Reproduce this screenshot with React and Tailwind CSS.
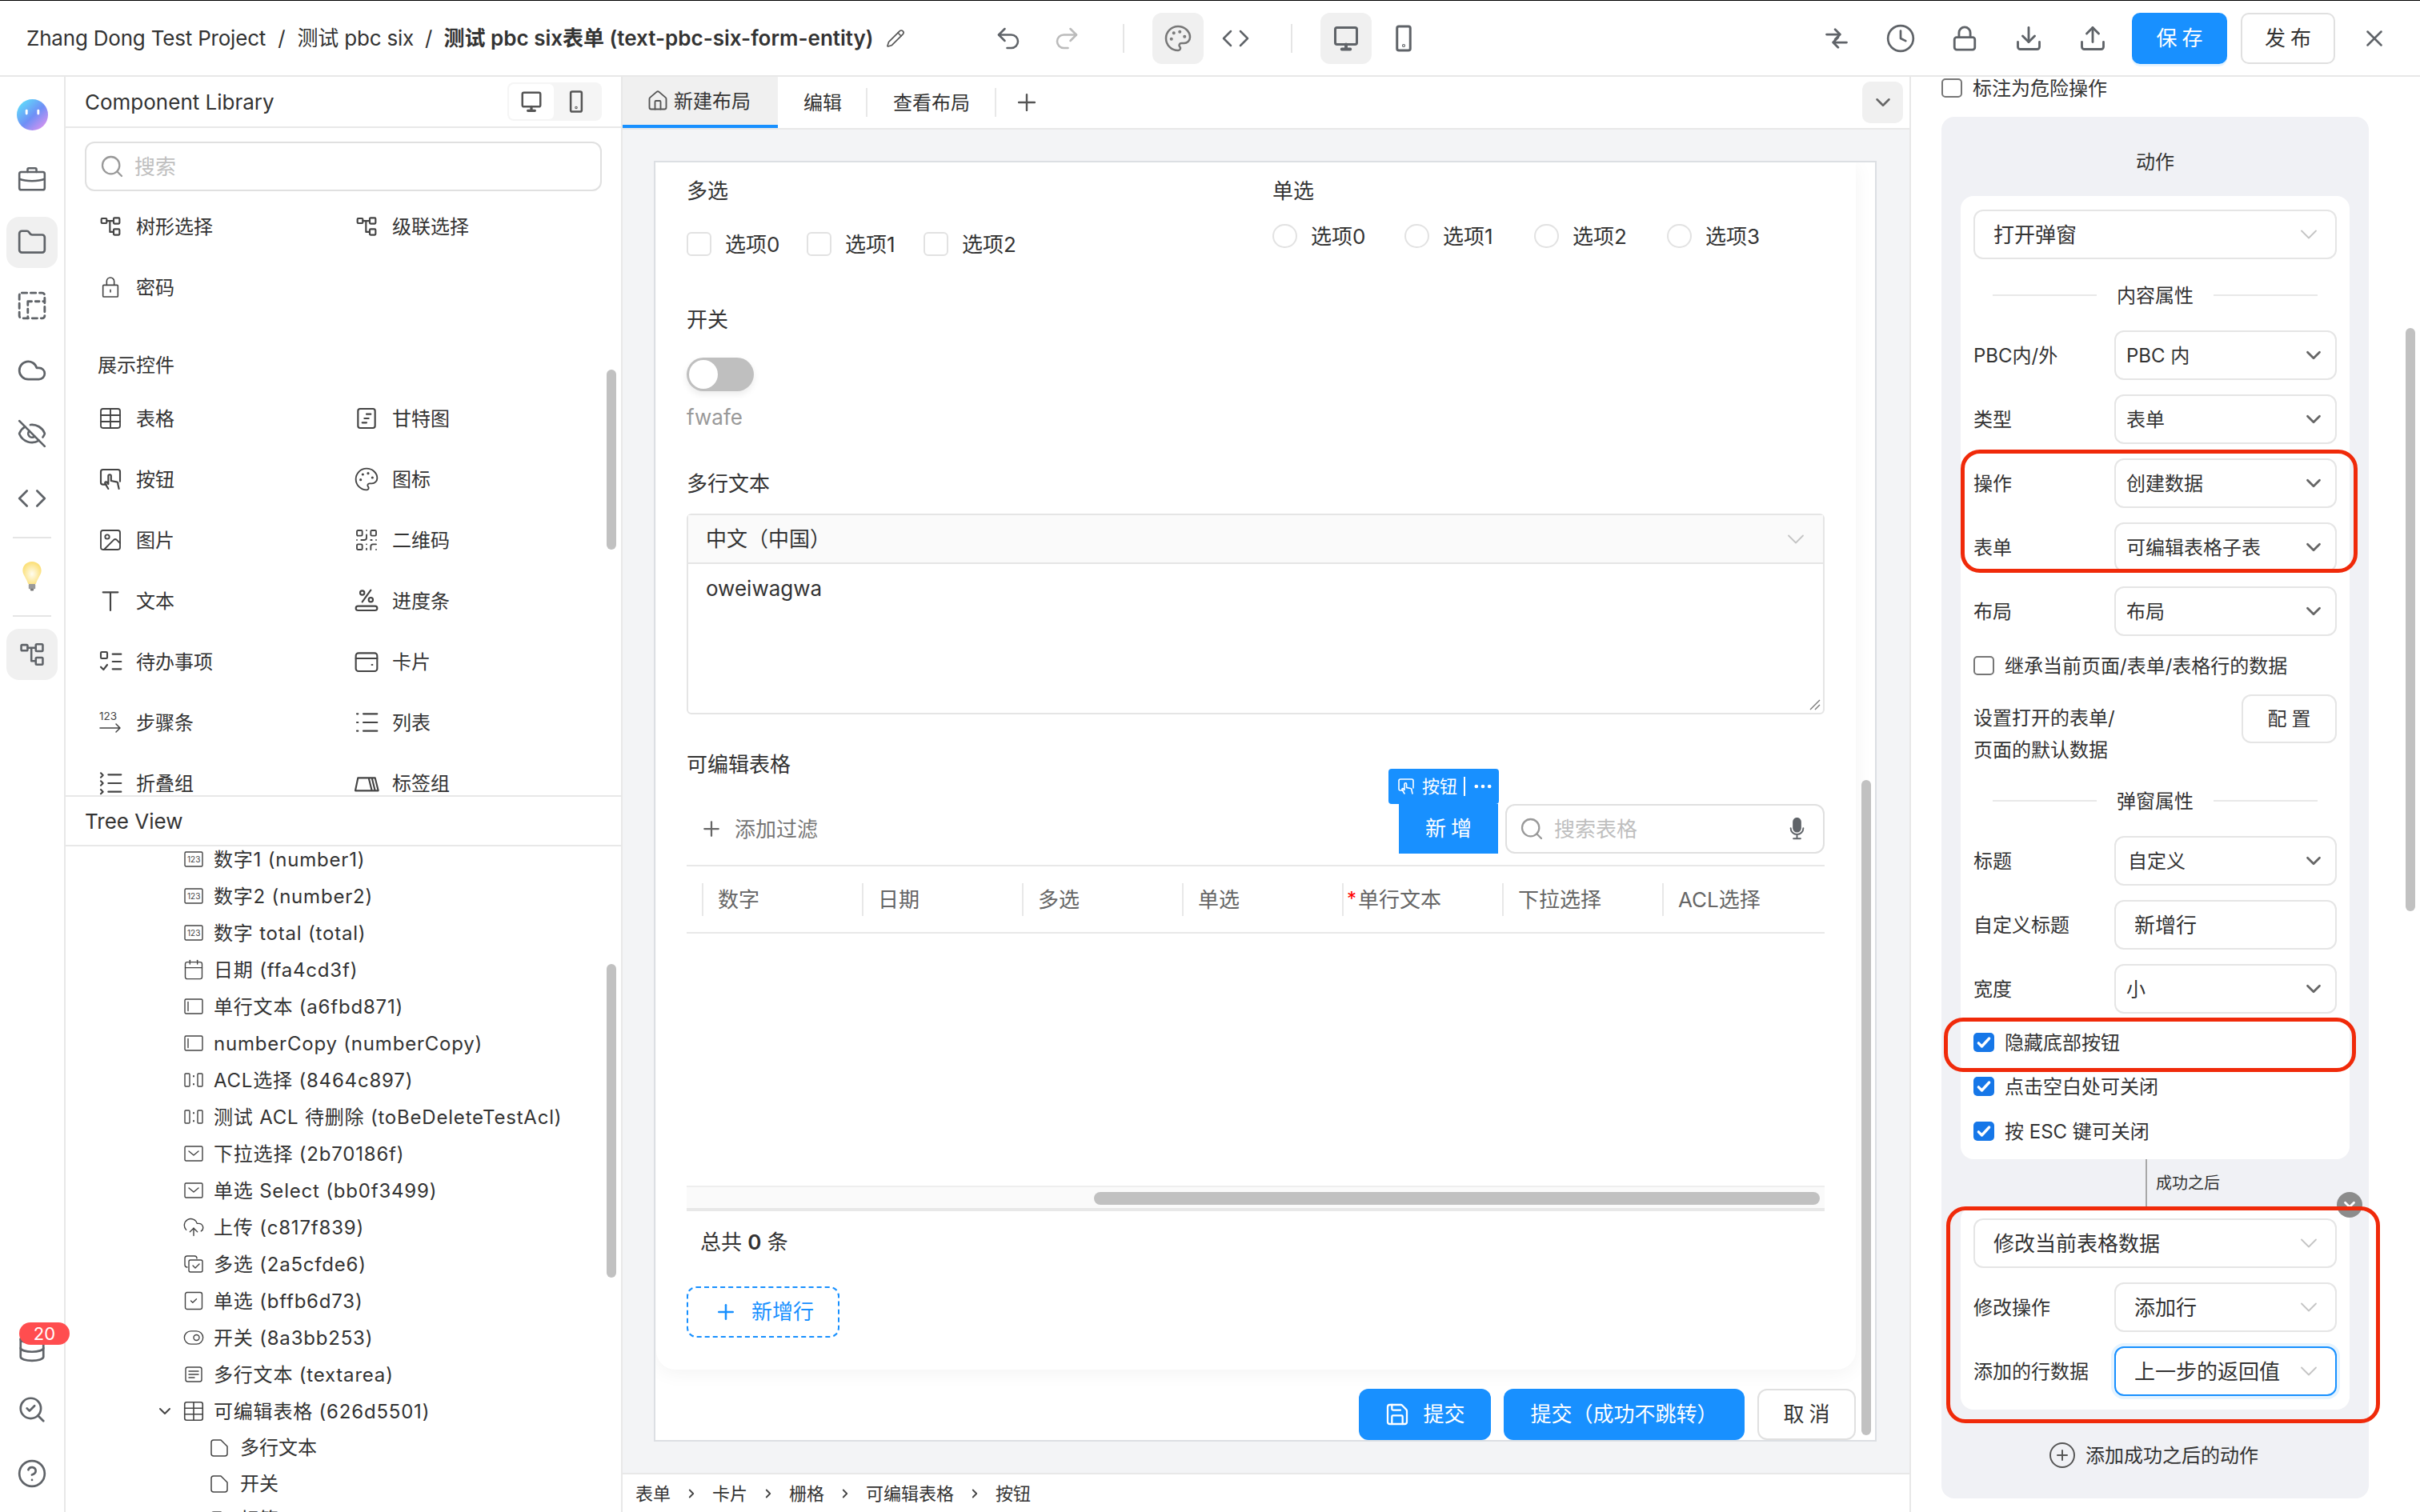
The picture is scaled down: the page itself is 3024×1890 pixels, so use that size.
import React from "react";
import {
  Undo2, Redo2, Palette, Code, Clock, Lock, Download, Upload, X, Pencil, Plus, Search,
  ChevronDown, ChevronRight, Home, Table, Image, QrCode, Calendar, CloudUpload,
  SquareCheck, ToggleRight, Folder, Cloud, EyeOff, Database, SearchCheck, CircleHelp,
  CirclePlus, Save, Ellipsis,
} from "lucide-react";

const Svg = ({ className = "w-[28px] h-[28px]", children, sw = 1.6 }) => (
  <svg viewBox="0 0 24 24" fill="none" stroke="currentColor" strokeWidth={sw} strokeLinecap="round" strokeLinejoin="round" className={className}>
    {children}
  </svg>
);

const TreeIcon = (p) => (
  <Svg {...p}>
    <rect x="3.500" y="4.500" width="5" height="4.500" rx="0.800" />
    <rect x="15" y="4" width="5.500" height="5.500" rx="0.800" />
    <rect x="15" y="14.500" width="5.500" height="5.500" rx="0.800" />
    <path d="M8.500 6.800H15M11.500 6.800V17.200H15" />
  </Svg>
);
const LockThin = (p) => (
  <Svg {...p} sw={1.2}>
    <rect x="5" y="10" width="14" height="11" rx="0.800" />
    <path d="M8.500 10V6.500a3.500 3.500 0 0 1 7 0V10M12 14.500v2" />
  </Svg>
);
const BriefcaseIcon = (p) => (
  <Svg {...p}>
    <rect x="2" y="7" width="20" height="14" rx="1.500" />
    <path d="M8.500 7V5a1 1 0 0 1 1-1h5a1 1 0 0 1 1 1v2M2 12.500c5 2 15 2 20 0" />
  </Svg>
);
const DesktopIcon = (p) => (
  <Svg {...p} sw={2}>
    <rect x="3" y="3" width="18" height="14" rx="1.500" />
    <path d="M12 17v3M8.500 21h7" strokeWidth="2.600" />
  </Svg>
);
const PhoneIcon = (p) => (
  <Svg {...p} sw={2}>
    <rect x="6.500" y="2" width="11" height="20" rx="1.500" />
    <circle cx="12" cy="18" r="0.400" />
  </Svg>
);
const SwapIcon = (p) => (
  <Svg {...p} sw={2.2}>
    <path d="M2 8h13M10.500 3l5 5-5 5M22 16H9M13.500 11l-5 5 5 5" />
  </Svg>
);
const DashedGrid = (p) => (
  <Svg {...p} sw={1.8}>
    <rect x="2" y="2" width="20" height="20" rx="2" strokeDasharray="4 3" />
    <path d="M8.700 8.700H22M8.700 8.700V22" strokeDasharray="3 3" />
  </Svg>
);
const Gantt = (p) => (
  <Svg {...p}>
    <rect x="4" y="3" width="16" height="18" rx="2" />
    <path d="M12 8h4M10 12h4M8 16h4" />
  </Svg>
);
const ButtonIcon = (p) => (
  <Svg {...p}>
    <path d="M8 17H5a2 2 0 0 1-2-2V5a2 2 0 0 1 2-2h14a2 2 0 0 1 2 2v9" />
    <path d="M10 21l-3-5c-.6-1.200 1-2 1.800-1l1.200 1.500V9a1.300 1.300 0 0 1 2.600 0v4.500l5 1c1.200.3 1.600 1.200 1.400 2.200L20 21" />
  </Svg>
);
const TextT = (p) => (
  <Svg {...p}>
    <path d="M5 4h14M12 4v17" />
  </Svg>
);
const Progress = (p) => (
  <Svg {...p}>
    <path d="M16 2 8 13" />
    <circle cx="8" cy="4.500" r="2" />
    <circle cx="16" cy="11" r="2" />
    <rect x="2" y="17" width="20" height="4" rx="2" />
  </Svg>
);
const Todo = (p) => (
  <Svg {...p}>
    <rect x="3" y="3" width="6" height="6" rx="1" />
    <path d="M3 17l2.500 2.500L9 15M14 5h8M14 12h8M14 19h8" />
  </Svg>
);
const CardIcon = (p) => (
  <Svg {...p}>
    <rect x="2" y="4" width="20" height="17" rx="2.500" />
    <path d="M2 9h20M17 15h.5" />
  </Svg>
);
const Steps = () => (
  <svg viewBox="0 0 28 28" fill="none" stroke="currentColor" strokeWidth="1.500" strokeLinecap="round" strokeLinejoin="round" className="w-[28px] h-[28px] shrink-0">
    <text x="0" y="11" fontSize="13.500" fill="currentColor" stroke="none" fontFamily="Inter">123</text>
    <path d="M1 21h25M21 16l5 5-5 5" />
  </svg>
);
const DotList = (p) => (
  <Svg {...p}>
    <path d="M9 4h13M9 12h13M9 20h13M3 4h1M3 12h1M3 20h1" />
  </Svg>
);
const Collapse = (p) => (
  <Svg {...p}>
    <path d="M10 4h12M10 12h12M10 20h12M3 2.500l2 2-2 2M3 10l2 2-2 2M3 18l2 2-2 2" />
  </Svg>
);
const TabsIcon = (p) => (
  <Svg {...p}>
    <path d="M1.500 19 4 7h10l3 12zM14 7h3l3 12M17 7h3l3 12M1.500 19H23" />
  </Svg>
);
const NumberBox = () => (
  <svg viewBox="0 0 24 24" fill="none" stroke="currentColor" strokeWidth="1.400" className="w-[24px] h-[24px]">
    <rect x="1" y="3" width="22" height="18" rx="1.500" />
    <text x="4" y="16" fontSize="10" fill="currentColor" stroke="none" fontFamily="Inter">123</text>
  </svg>
);
const InputBox = () => (
  <Svg className="w-[24px] h-[24px]" sw={1.4}>
    <rect x="1" y="3" width="22" height="18" rx="1.500" />
    <path d="M5 6.500v11" />
  </Svg>
);
const AclBox = () => (
  <Svg className="w-[24px] h-[24px]" sw={1.4}>
    <rect x="1" y="4" width="6" height="16" rx="1" />
    <rect x="17" y="4" width="6" height="16" rx="1" />
    <path d="M12 7v.5M12 17v.5" strokeWidth="2" />
  </Svg>
);
const SelectBox = () => (
  <Svg className="w-[24px] h-[24px]" sw={1.4}>
    <rect x="1" y="3" width="22" height="18" rx="1.500" />
    <path d="M6 9l6 5 6-5" />
  </Svg>
);
const MultiBox = () => (
  <Svg className="w-[24px] h-[24px]" sw={1.4}>
    <path d="M4 16c-2 0-3-1-3-3V5c0-2 1-3 3-3h9c2 0 3 1 3 3" />
    <rect x="6" y="7" width="17" height="15" rx="2" />
    <path d="M11 14l3 3 5-5" />
  </Svg>
);
const TextareaBox = () => (
  <Svg className="w-[24px] h-[24px]" sw={1.4}>
    <rect x="2" y="3" width="20" height="18" rx="2.500" />
    <path d="M6 8h12M6 12h12M6 16h7" />
  </Svg>
);
const FileBox = () => (
  <Svg className="w-[24px] h-[24px]" sw={1.5}>
    <path d="M14 2H5a3 3 0 0 0-3 3v14a3 3 0 0 0 3 3h14a3 3 0 0 0 3-3V10z" />
  </Svg>
);
const MicIcon = () => (
  <svg viewBox="0 0 24 32" className="w-[21px] h-[28px] ml-auto text-[#5f6368]" fill="none" stroke="currentColor" strokeWidth="2.200" strokeLinecap="round">
    <rect x="7" y="1" width="10" height="19" rx="5" fill="currentColor" />
    <path d="M3 15c0 5 4 9 9 9s9-4 9-9M12 24v6M7 30h10" />
  </svg>
);
const Avatar = () => (
  <svg viewBox="0 0 40 40" className="w-[39px] h-[39px]">
    <defs>
      <linearGradient id="av" x1="0.05" y1="0.1" x2="0.85" y2="0.95">
        <stop offset="0" stopColor="#5fe0fb" />
        <stop offset="0.55" stopColor="#6f8ff6" />
        <stop offset="1" stopColor="#d793f0" />
      </linearGradient>
    </defs>
    <circle cx="20" cy="20" r="20" fill="url(#av)" />
    <rect x="11" y="13" width="3" height="7" rx="1.500" fill="#fff" />
    <rect x="26" y="13" width="3" height="7" rx="1.500" fill="#fff" />
  </svg>
);
const Bulb = () => (
  <svg viewBox="0 0 24 36" className="w-[26px] h-[38px]">
    <defs>
      <radialGradient id="bulb" cx="0.5" cy="0.55" r="0.6">
        <stop offset="0" stopColor="#fffdf0" />
        <stop offset="1" stopColor="#fbdc6a" />
      </radialGradient>
    </defs>
    <path d="M12 1C5.500 1 1 5.800 1 11.500c0 5 4.700 9.500 6.500 16h9c1.800-6.500 6.500-11 6.500-16C23 5.800 18.500 1 12 1z" fill="url(#bulb)" />
    <rect x="8" y="27.500" width="8" height="6" rx="1" fill="#9a9a9a" />
    <rect x="10" y="33" width="4" height="2.500" rx="1" fill="#777" />
  </svg>
);

const Check = ({ on, label, className = "" }) => (
  <div className={`flex items-center h-[26px] ${className}`}>
    {on ? (
      <span className="w-[26px] h-[24px] rounded-[5px] bg-[#1677e8] flex items-center justify-center text-white">
        <svg viewBox="0 0 24 24" fill="none" stroke="currentColor" strokeWidth="4" strokeLinecap="round" strokeLinejoin="round" className="w-[20px] h-[20px]">
          <path d="M4 13l5 5L20 6" />
        </svg>
      </span>
    ) : (
      <span className="w-[26px] h-[24px] rounded-[5px] border-2 border-[#767676] bg-white" />
    )}
    <span className="ml-[13px] pt-[2px]">{label}</span>
  </div>
);

const Select = ({ value, pad = "pl-[13px]", thin, blue, input, className = "" }) => (
  <div className={`h-[62px] flex items-center justify-between border-2 rounded-[12px] bg-white text-[#333] ${thin || input ? "text-[26px]" : "text-[24px]"} ${pad} ${blue ? "border-[#1890ff] shadow-[0_0_0_4px_#e6f4ff]" : "border-[#e5e5e5]"} ${className}`}>
    <span className="pt-[2px]">{value}</span>
    {!input &&
      (thin ? (
        <ChevronDown className="w-[36px] h-[36px] mr-[15px] text-[#c4c4c4]" strokeWidth={1.2} />
      ) : (
        <ChevronDown className="w-[30px] h-[30px] mr-[12px] text-[#666]" strokeWidth={2.2} />
      ))}
  </div>
);

const Row = ({ label, className = "", ...rest }) => (
  <div className={`flex items-center justify-between ${className}`}>
    <span className="pt-[2px]">{label}</span>
    <Select {...rest} className="w-[278px]" />
  </div>
);

const Divider = ({ text, className = "" }) => (
  <div className={`h-[36px] flex items-center justify-center ${className}`}>
    <span className="w-[130px] h-[2px] bg-[#e8e8e8]" />
    <span className="mx-[25px] pt-[2px]">{text}</span>
    <span className="w-[130px] h-[2px] bg-[#e8e8e8]" />
  </div>
);

const library = [
  [Table, "表格", Gantt, "甘特图"],
  [ButtonIcon, "按钮", Palette, "图标"],
  [Image, "图片", QrCode, "二维码"],
  [TextT, "文本", Progress, "进度条"],
  [Todo, "待办事项", CardIcon, "卡片"],
  [Steps, "步骤条", DotList, "列表"],
  [Collapse, "折叠组", TabsIcon, "标签组"],
];

const tree = [
  [NumberBox, "数字1 (number1)"],
  [NumberBox, "数字2 (number2)"],
  [NumberBox, "数字 total (total)"],
  [Calendar, "日期 (ffa4cd3f)"],
  [InputBox, "单行文本 (a6fbd871)"],
  [InputBox, "numberCopy (numberCopy)"],
  [AclBox, "ACL选择 (8464c897)"],
  [AclBox, "测试 ACL 待删除 (toBeDeleteTestAcl)"],
  [SelectBox, "下拉选择 (2b70186f)"],
  [SelectBox, "单选 Select (bb0f3499)"],
  [CloudUpload, "上传 (c817f839)"],
  [MultiBox, "多选 (2a5cfde6)"],
  [SquareCheck, "单选 (bffb6d73)"],
  [ToggleRight, "开关 (8a3bb253)"],
  [TextareaBox, "多行文本 (textarea)"],
];

const LibItem = ({ icon: Icon, text }) => (
  <div className="h-[76px] flex items-center">
    <span className="w-[28px] mr-[18px] flex justify-center text-[#444]">
      <Icon className="w-[32px] h-[32px] shrink-0" strokeWidth={1.4} />
    </span>
    <span className="pt-[2px]">{text}</span>
  </div>
);

const RailIcon = ({ icon: Icon, active, className = "" }) => (
  <div className={`mx-[8px] w-[64px] h-[64px] flex items-center justify-center rounded-[16px] text-[#5f6368] ${active ? "bg-[#f0f0f0]" : ""} ${className}`}>
    <Icon className="w-[38px] h-[38px]" strokeWidth={1.7} />
  </div>
);

const Rail = () => (
  <div className="w-[82px] shrink-0 border-r-2 border-[#e8e8e8] flex flex-col">
    <div className="h-[16px]" />
    <div className="h-[64px] flex items-center justify-center mt-[-1px]"><Avatar /></div>
    <RailIcon icon={BriefcaseIcon} className="mt-[16px]" />
    <RailIcon icon={Folder} active className="mt-[16px]" />
    <RailIcon icon={DashedGrid} className="mt-[15px]" />
    <RailIcon icon={Cloud} className="mt-[17px]" />
    <RailIcon icon={EyeOff} className="mt-[15px]" />
    <RailIcon icon={Code} className="mt-[17px]" />
    <div className="mx-[16px] w-[48px] h-[2px] bg-[#e5e5e5] mt-[16px]" />
    <div className="h-[64px] flex items-center justify-center mt-[15px]"><Bulb /></div>
    <div className="mx-[16px] w-[48px] h-[2px] bg-[#e5e5e5] mt-[17px]" />
    <RailIcon icon={TreeIcon} active className="mt-[15px]" />
    <div className="relative mt-auto mb-[16px] flex flex-col">
      <div className="relative">
        <RailIcon icon={Database} />
        <span className="absolute left-[24px] top-[0px] w-[63px] h-[28px] rounded-full bg-[#ff4d4f] text-white text-[22px] leading-[28px] text-center">20</span>
      </div>
      <RailIcon icon={SearchCheck} className="mt-[13px]" />
      <RailIcon icon={CircleHelp} className="mt-[16px]" />
    </div>
  </div>
);

const ComponentPanel = () => (
  <div className="w-[696px] shrink-0 border-r-2 border-[#e8e8e8] flex flex-col min-h-0 relative">
    <div className="h-[64px] shrink-0 border-b-2 border-[#e8e8e8] flex items-center justify-between pl-[24px] pr-[24px]">
      <span className="text-[26px] text-[#333] pt-[1px]">Component Library</span>
      <div className="flex w-[118px] h-[48px] bg-[#f5f5f5] rounded-[8px] p-[2px]">
        <span className="w-[56px] bg-white rounded-[6px] flex items-center justify-center text-[#555]"><DesktopIcon className="w-[30px] h-[30px]" /></span>
        <span className="w-[56px] flex items-center justify-center text-[#555]"><PhoneIcon className="w-[30px] h-[30px]" /></span>
      </div>
    </div>
    <div className="h-[834px] shrink-0 overflow-hidden">
      <div className="ml-[24px] mt-[17px] w-[646px] h-[62px] border-2 border-[#e0e0e0] rounded-[12px] flex items-center pl-[16px]">
        <Search className="w-[32px] h-[32px] text-[#999]" strokeWidth={1.7} />
        <span className="ml-[12px] text-[26px] text-[#bfbfbf] pt-[2px]">搜索</span>
      </div>
      <div className="mt-[6px] pl-[42px] grid grid-cols-[320px_320px]">
        <LibItem icon={TreeIcon} text="树形选择" />
        <LibItem icon={TreeIcon} text="级联选择" />
        <LibItem icon={LockThin} text="密码" />
      </div>
      <div className="mt-[32px] h-[56px] pl-[40px] flex items-center">展示控件</div>
      <div className="pl-[42px] grid grid-cols-[320px_320px]">
        {library.map(([a, at, b, bt]) => (
          <React.Fragment key={at}>
            <LibItem icon={a} text={at} />
            <LibItem icon={b} text={bt} />
          </React.Fragment>
        ))}
      </div>
    </div>
    <div className="h-[64px] shrink-0 border-y-2 border-[#e8e8e8] flex items-center pl-[24px] text-[26px] text-[#333]"><span className="pt-[1px]">Tree View</span></div>
    <div className="flex-1 min-h-0 overflow-hidden">
      <div className="mt-[-7px]">
        {tree.map(([Icon, text]) => (
          <div key={text} className="h-[46px] pl-[148px] flex items-center text-[#444]">
            <span className="w-[24px] mr-[13px] flex justify-center"><Icon className="w-[28px] h-[28px] shrink-0" strokeWidth={1.2} /></span>
            <span className="text-[#333] whitespace-nowrap tracking-[0.8px] pt-[1px]">{text}</span>
          </div>
        ))}
        <div className="h-[46px] pl-[112px] flex items-center text-[#444]">
          <ChevronDown className="w-[24px] h-[24px] mr-[12px]" strokeWidth={2} />
          <span className="w-[24px] mr-[13px] flex justify-center"><Table className="w-[30px] h-[30px] shrink-0" strokeWidth={1.3} /></span>
          <span className="text-[#333] tracking-[0.8px] pt-[1px]">可编辑表格 (626d5501)</span>
        </div>
        {["多行文本", "开关", "标签"].map((t) => (
          <div key={t} className="h-[45px] pl-[180px] flex items-center text-[#444]">
            <span className="w-[24px] mr-[14px] flex justify-center"><FileBox /></span>
            <span className="text-[#333] pt-[1px]">{t}</span>
          </div>
        ))}
      </div>
    </div>
    <span className="absolute left-[676px] top-[366px] w-[12px] h-[225px] rounded-full bg-[#c1c1c1]" />
    <span className="absolute left-[676px] top-[1109px] w-[12px] h-[392px] rounded-full bg-[#c1c1c1]" />
  </div>
);

const Opt = ({ box, text, className = "" }) => (
  <div className={`flex items-center h-[30px] ${className}`}>
    <span className={`w-[31px] h-[30px] border-2 border-[#e2e2e2] bg-white ${box}`} />
    <span className="ml-[17px] pt-[2px]">{text}</span>
  </div>
);

const Canvas = () => (
  <div className="flex-1 min-h-0 bg-[#f3f4f6] pt-[39px] pl-[39px] text-[26px] leading-[36px]">
    <div className="relative w-[1528px] h-[1601px] border-2 border-[#dcdfe3] bg-white overflow-hidden">
      <div className="relative ml-px w-[1499px] h-[1509px] rounded-b-[24px] bg-white shadow-[0_4px_24px_rgba(0,0,0,0.05)] pl-[38px] pt-[16px]">
        <div className="flex">
          <div className="w-[732px]">
            <div className="h-[36px] pt-[2px]">多选</div>
            <div className="flex mt-[35px]">
              <Opt box="rounded-[6px]" text="选项0" className="w-[150px]" />
              <Opt box="rounded-[6px]" text="选项1" className="w-[146px]" />
              <Opt box="rounded-[6px]" text="选项2" />
            </div>
          </div>
          <div>
            <div className="h-[36px] pt-[2px]">单选</div>
            <div className="flex mt-[25px]">
              <Opt box="rounded-full" text="选项0" className="w-[165px]" />
              <Opt box="rounded-full" text="选项1" className="w-[162px]" />
              <Opt box="rounded-full" text="选项2" className="w-[166px]" />
              <Opt box="rounded-full" text="选项3" />
            </div>
          </div>
        </div>
        <div className="mt-[62px]">开关</div>
        <div className="mt-[29px] w-[84px] h-[42px] rounded-full bg-[#bfbfbf] p-[3px] shadow-[0_4px_8px_rgba(0,0,0,0.08)]">
          <div className="w-[36px] h-[36px] rounded-full bg-white" />
        </div>
        <div className="mt-[15px] text-[#999]">fwafe</div>
        <div className="mt-[47px]">多行文本</div>
        <div className="mt-[19px] w-[1422px] h-[251px] border-2 border-[#e5e5e5] rounded-[6px] relative">
          <div className="h-[61px] border-b-2 border-[#e5e5e5] bg-[#fafafa] flex items-center justify-between pl-[22px] pr-[16px]">
            <span>中文（中国）</span>
            <ChevronDown className="w-[36px] h-[36px] text-[#c4c4c4]" strokeWidth={1.2} />
          </div>
          <div className="pl-[22px] pt-[13px]">oweiwagwa</div>
          <svg viewBox="0 0 14 14" className="absolute right-[3px] bottom-[3px] w-[14px] h-[14px]" stroke="#777" strokeWidth="1.400">
            <path d="M1 13 13 1M7 13l6-6" />
          </svg>
        </div>
        <div className="mt-[45px]">可编辑表格</div>
        <div className="mt-[31px] w-[1422px] h-[62px] flex items-center relative">
          <Plus className="ml-[16px] w-[30px] h-[30px] text-[#666]" strokeWidth={1.8} />
          <span className="ml-[14px] text-[#777] pt-[2px]">添加过滤</span>
          <div className="relative ml-auto w-[124px] h-[62px] bg-[#1890ff] text-white text-[26px] flex items-center justify-center tracking-[6px] pl-[6px]">
            新增
            <div className="absolute left-[-13px] top-[-44px] w-[138px] h-[44px] rounded-[4px] bg-[#1890ff] text-[22px] tracking-normal flex items-center pl-[10px]">
              <ButtonIcon className="w-[24px] h-[24px]" />
              <span className="ml-[8px]">按钮</span>
              <span className="ml-[8px] w-[2px] h-[24px] bg-white" />
              <Ellipsis className="ml-[8px] w-[28px] h-[28px]" />
            </div>
          </div>
          <div className="ml-[9px] w-[399px] h-[62px] border-2 border-[#e0e0e0] rounded-[12px] flex items-center pl-[15px] pr-[22px]">
            <Search className="w-[32px] h-[32px] text-[#999]" strokeWidth={1.7} />
            <span className="ml-[12px] text-[#bfbfbf] pt-[2px]">搜索表格</span>
            <MicIcon />
          </div>
        </div>
        <div className="mt-[14px] w-[1422px] h-[86px] border-y-2 border-[#e8e8e8] pl-[19px] flex items-center text-[#666]">
          {["数字", "日期", "多选", "单选", "单行文本", "下拉选择", "ACL选择"].map((h) => (
            <div key={h} className="w-[200px] h-[41px] border-l-2 border-[#e8e8e8] flex items-center pl-[18px] pt-[2px] relative">
              {h === "单行文本" && <span className="absolute left-[4px] top-[2px] text-[#f00] text-[24px]">*</span>}
              {h}
            </div>
          ))}
        </div>
        <div className="mt-[315px] w-[1422px] h-[32px] border-t-2 border-b-4 border-t-[#eeeeee] border-b-[#e8e8e8] bg-[#fafafa] pt-[6px]">
          <div className="ml-[509px] w-[907px] h-[16px] rounded-full bg-[#c1c1c1]" />
        </div>
        <div className="mt-[21px] ml-[17px]">
          总共 <b className="font-semibold">0</b> 条
        </div>
        <div className="mt-[37px] w-[191px] h-[64px] border-2 border-dashed border-[#1890ff] rounded-[12px] flex items-center pl-[32px] text-[#1890ff]">
          <Plus className="w-[30px] h-[30px]" strokeWidth={2} />
          <span className="ml-[17px]">新增行</span>
        </div>
      </div>
      <div className="w-[1500px] mt-[24px] flex justify-end gap-[16px]">
        <div className="w-[165px] h-[64px] rounded-[12px] bg-[#1890ff] text-white flex items-center justify-center">
          <Save className="w-[32px] h-[32px]" strokeWidth={1.7} />
          <span className="ml-[16px]">提交</span>
        </div>
        <div className="w-[301px] h-[64px] rounded-[12px] bg-[#1890ff] text-white flex items-center justify-center">提交（成功不跳转）</div>
        <div className="w-[123px] h-[64px] rounded-[12px] bg-white border-2 border-[#e0e0e0] flex items-center justify-center tracking-[6px] pl-[6px]">取消</div>
      </div>
      <span className="absolute left-[1507px] top-[772px] w-[12px] h-[819px] rounded-full bg-[#c1c1c1]" />
    </div>
  </div>
);

const Main = () => (
  <div className="flex-1 min-w-0 flex flex-col">
    <div className="h-[66px] shrink-0 border-b-2 border-[#e8e8e8] flex">
      <div className="w-[194px] h-[64px] bg-[#f0f0f0] border-b-4 border-[#1890ff] flex items-center pl-[30px]">
        <Home className="w-[28px] h-[28px] text-[#555]" strokeWidth={1.6} />
        <span className="ml-[6px] pt-[2px]">新建布局</span>
      </div>
      <div className="w-[112px] h-[64px] flex items-center">
        <span className="ml-[32px] pt-[2px]">编辑</span>
        <span className="ml-auto w-[2px] h-[36px] bg-[#e8e8e8]" />
      </div>
      <div className="w-[161px] h-[64px] flex items-center">
        <span className="ml-[32px] pt-[2px]">查看布局</span>
        <span className="ml-auto w-[2px] h-[36px] bg-[#e8e8e8]" />
      </div>
      <div className="h-[64px] flex items-center ml-[21px]">
        <Plus className="w-[34px] h-[34px] text-[#555]" strokeWidth={1.7} />
      </div>
      <div className="ml-auto mr-[8px] mt-[6px] w-[51px] h-[52px] rounded-[10px] bg-[#f0f0f0] flex items-center justify-center">
        <ChevronDown className="w-[30px] h-[30px] text-[#666]" strokeWidth={2} />
      </div>
    </div>
    <Canvas />
    <div className="h-[49px] shrink-0 border-t-2 border-[#e8e8e8] flex items-center pl-[16px] text-[22px] text-[#333]">
      {["表单", "卡片", "栅格", "可编辑表格", "按钮"].map((t, i) => (
        <React.Fragment key={t}>
          {i > 0 && <ChevronRight className="w-[18px] h-[18px] mx-[17px] text-[#444]" strokeWidth={2.4} />}
          <span>{t}</span>
        </React.Fragment>
      ))}
    </div>
  </div>
);

const RightPanel = () => (
  <div className="w-[638px] shrink-0 border-l-2 border-[#e8e8e8] relative overflow-hidden pl-[38px] pt-px">
    <Check label="标注为危险操作" />
    <div className="mt-[23px] w-[534px] bg-[#f0f1f5] rounded-[16px] pt-[37px] pb-[36px]">
      <div className="text-center pt-[2px] h-[36px]">动作</div>
      <div className="mt-[26px] ml-[24px] w-[486px] bg-white rounded-[16px] px-[16px] pt-[17px] pb-[22px]">
        <Select value="打开弹窗" pad="pl-[23px]" thin />
        <Divider text="内容属性" className="mt-[27px]" />
        <div className="mt-[26px] flex flex-col gap-[18px]">
          <Row label="PBC内/外" value="PBC 内" />
          <Row label="类型" value="表单" />
          <Row label="操作" value="创建数据" />
          <Row label="表单" value="可编辑表格子表" />
          <Row label="布局" value="布局" />
        </div>
        <Check label="继承当前页面/表单/表格行的数据" className="mt-[24px]" />
        <div className="mt-[23px] flex items-start justify-between">
          <div className="mt-[10px] leading-[40px]">
            设置打开的表单/
            <br />
            页面的默认数据
          </div>
          <div className="w-[119px] h-[61px] rounded-[12px] border-2 border-[#e5e5e5] flex items-center justify-center tracking-[6px] pl-[6px]">配置</div>
        </div>
        <Divider text="弹窗属性" className="mt-[25px]" />
        <div className="mt-[26px] flex flex-col gap-[18px]">
          <Row label="标题" value="自定义" pad="pl-[15px]" />
          <Row label="自定义标题" value="新增行" pad="pl-[23px]" input />
          <Row label="宽度" value="小" />
        </div>
        <Check on label="隐藏底部按钮" className="mt-[23px]" />
        <Check on label="点击空白处可关闭" className="mt-[29px]" />
        <Check on label="按 ESC 键可关闭" className="mt-[30px]" />
      </div>
      <div className="ml-[255px] h-[59px] flex items-center">
        <span className="w-[2px] h-full bg-[#a8a8a8]" />
        <span className="ml-[11px] text-[20px]">成功之后</span>
      </div>
      <div className="ml-[24px] w-[486px] bg-white rounded-[16px] px-[16px] pt-[15px] pb-[17px]">
        <Select value="修改当前表格数据" pad="pl-[23px]" thin />
        <div className="mt-[18px] flex flex-col gap-[18px]">
          <Row label="修改操作" value="添加行" pad="pl-[23px]" thin />
          <Row label="添加的行数据" value="上一步的返回值" pad="pl-[23px]" thin blue />
        </div>
      </div>
      <div className="mt-[39px] ml-[133px] flex items-center h-[36px]">
        <CirclePlus className="w-[36px] h-[36px] text-[#555]" strokeWidth={1.3} />
        <span className="ml-[11px] pt-[2px]">添加成功之后的动作</span>
      </div>
    </div>
    <div className="absolute left-[532px] top-[1394px] w-[32px] h-[32px] rounded-full bg-[#8c8c8c] flex items-center justify-center text-white">
      <ChevronDown className="w-[22px] h-[22px]" strokeWidth={3} />
    </div>
    <span className="absolute left-[618px] top-[314px] w-[12px] h-[729px] rounded-full bg-[#c1c1c1]" />
    <div className="absolute left-[62px] top-[466px] w-[496px] h-[154px] border-[5px] border-[#f02a0a] rounded-[24px]" />
    <div className="absolute left-[41px] top-[1176px] w-[515px] h-[68px] border-[5px] border-[#f02a0a] rounded-[24px]" />
    <div className="absolute left-[44px] top-[1412px] w-[542px] h-[271px] border-[5px] border-[#f02a0a] rounded-[24px]" />
  </div>
);

const TopIcon = ({ icon: Icon, active, className = "", stroke = "text-[#5f6368]" }) => (
  <div className={`w-[64px] h-[64px] rounded-[12px] flex items-center justify-center ${active ? "bg-[#f0f0f0]" : ""} ${stroke} ${className}`}>
    <Icon className="w-[36px] h-[36px]" strokeWidth={1.7} />
  </div>
);

const Header = () => (
  <div className="h-[95px] shrink-0 border-b-2 border-[#e8e8e8] flex items-center text-[26px] text-[#333]">
    <div className="w-[1228px] shrink-0 pl-[33px] flex items-center whitespace-nowrap">
      <span className="tracking-[-0.2px]">Zhang Dong Test Project</span>
      <span className="mx-[15px]">/</span>
      <span className="tracking-[-0.2px]">测试 pbc six</span>
      <span className="mx-[14px]">/</span>
      <span className="font-semibold">测试 pbc six表单 (text-pbc-six-form-entity)</span>
      <Pencil className="ml-[15px] w-[24px] h-[24px] text-[#555]" strokeWidth={1.6} />
    </div>
    <TopIcon icon={Undo2} />
    <TopIcon icon={Redo2} stroke="text-[#bbb]" className="ml-[9px]" />
    <span className="ml-[38px] w-[2px] h-[36px] bg-[#e5e5e5]" />
    <TopIcon icon={Palette} active className="ml-[35px]" stroke="text-[#777]" />
    <TopIcon icon={Code} className="ml-[8px]" />
    <span className="ml-[37px] w-[2px] h-[36px] bg-[#e5e5e5]" />
    <TopIcon icon={DesktopIcon} active className="ml-[35px]" />
    <TopIcon icon={PhoneIcon} className="ml-[8px]" />
    <div className="ml-auto pr-[37px] flex items-center">
      <div className="flex gap-[40px] text-[#5f6368] items-center">
        <SwapIcon className="w-[40px] h-[30px]" />
        <Clock className="w-[40px] h-[38px]" strokeWidth={1.7} />
        <Lock className="w-[40px] h-[34px]" strokeWidth={2} />
        <Download className="w-[40px] h-[36px]" strokeWidth={1.9} />
        <Upload className="w-[40px] h-[36px]" strokeWidth={1.9} />
      </div>
      <div className="ml-[29px] w-[119px] h-[64px] rounded-[10px] bg-[#1890ff] text-white flex items-center justify-center tracking-[6px] pl-[6px] shadow-[0_3px_0_#e6f4ff]">保存</div>
      <div className="ml-[17px] w-[118px] h-[64px] rounded-[10px] border-2 border-[#e0e0e0] flex items-center justify-center tracking-[6px] pl-[6px]">发布</div>
      <X className="ml-[29px] w-[40px] h-[34px] text-[#5f6368]" strokeWidth={1.8} />
    </div>
  </div>
);

export default function App() {
  return (
    <div className="w-[3024px] h-[1890px] overflow-hidden flex flex-col bg-white text-[24px] leading-[36px] text-[#333] [font-family:Inter,'Noto_Sans_CJK_SC',sans-serif]">
      <div className="h-px bg-black shrink-0" />
      <Header />
      <div className="flex-1 min-h-0 flex">
        <Rail />
        <ComponentPanel />
        <Main />
        <RightPanel />
      </div>
    </div>
  );
}
